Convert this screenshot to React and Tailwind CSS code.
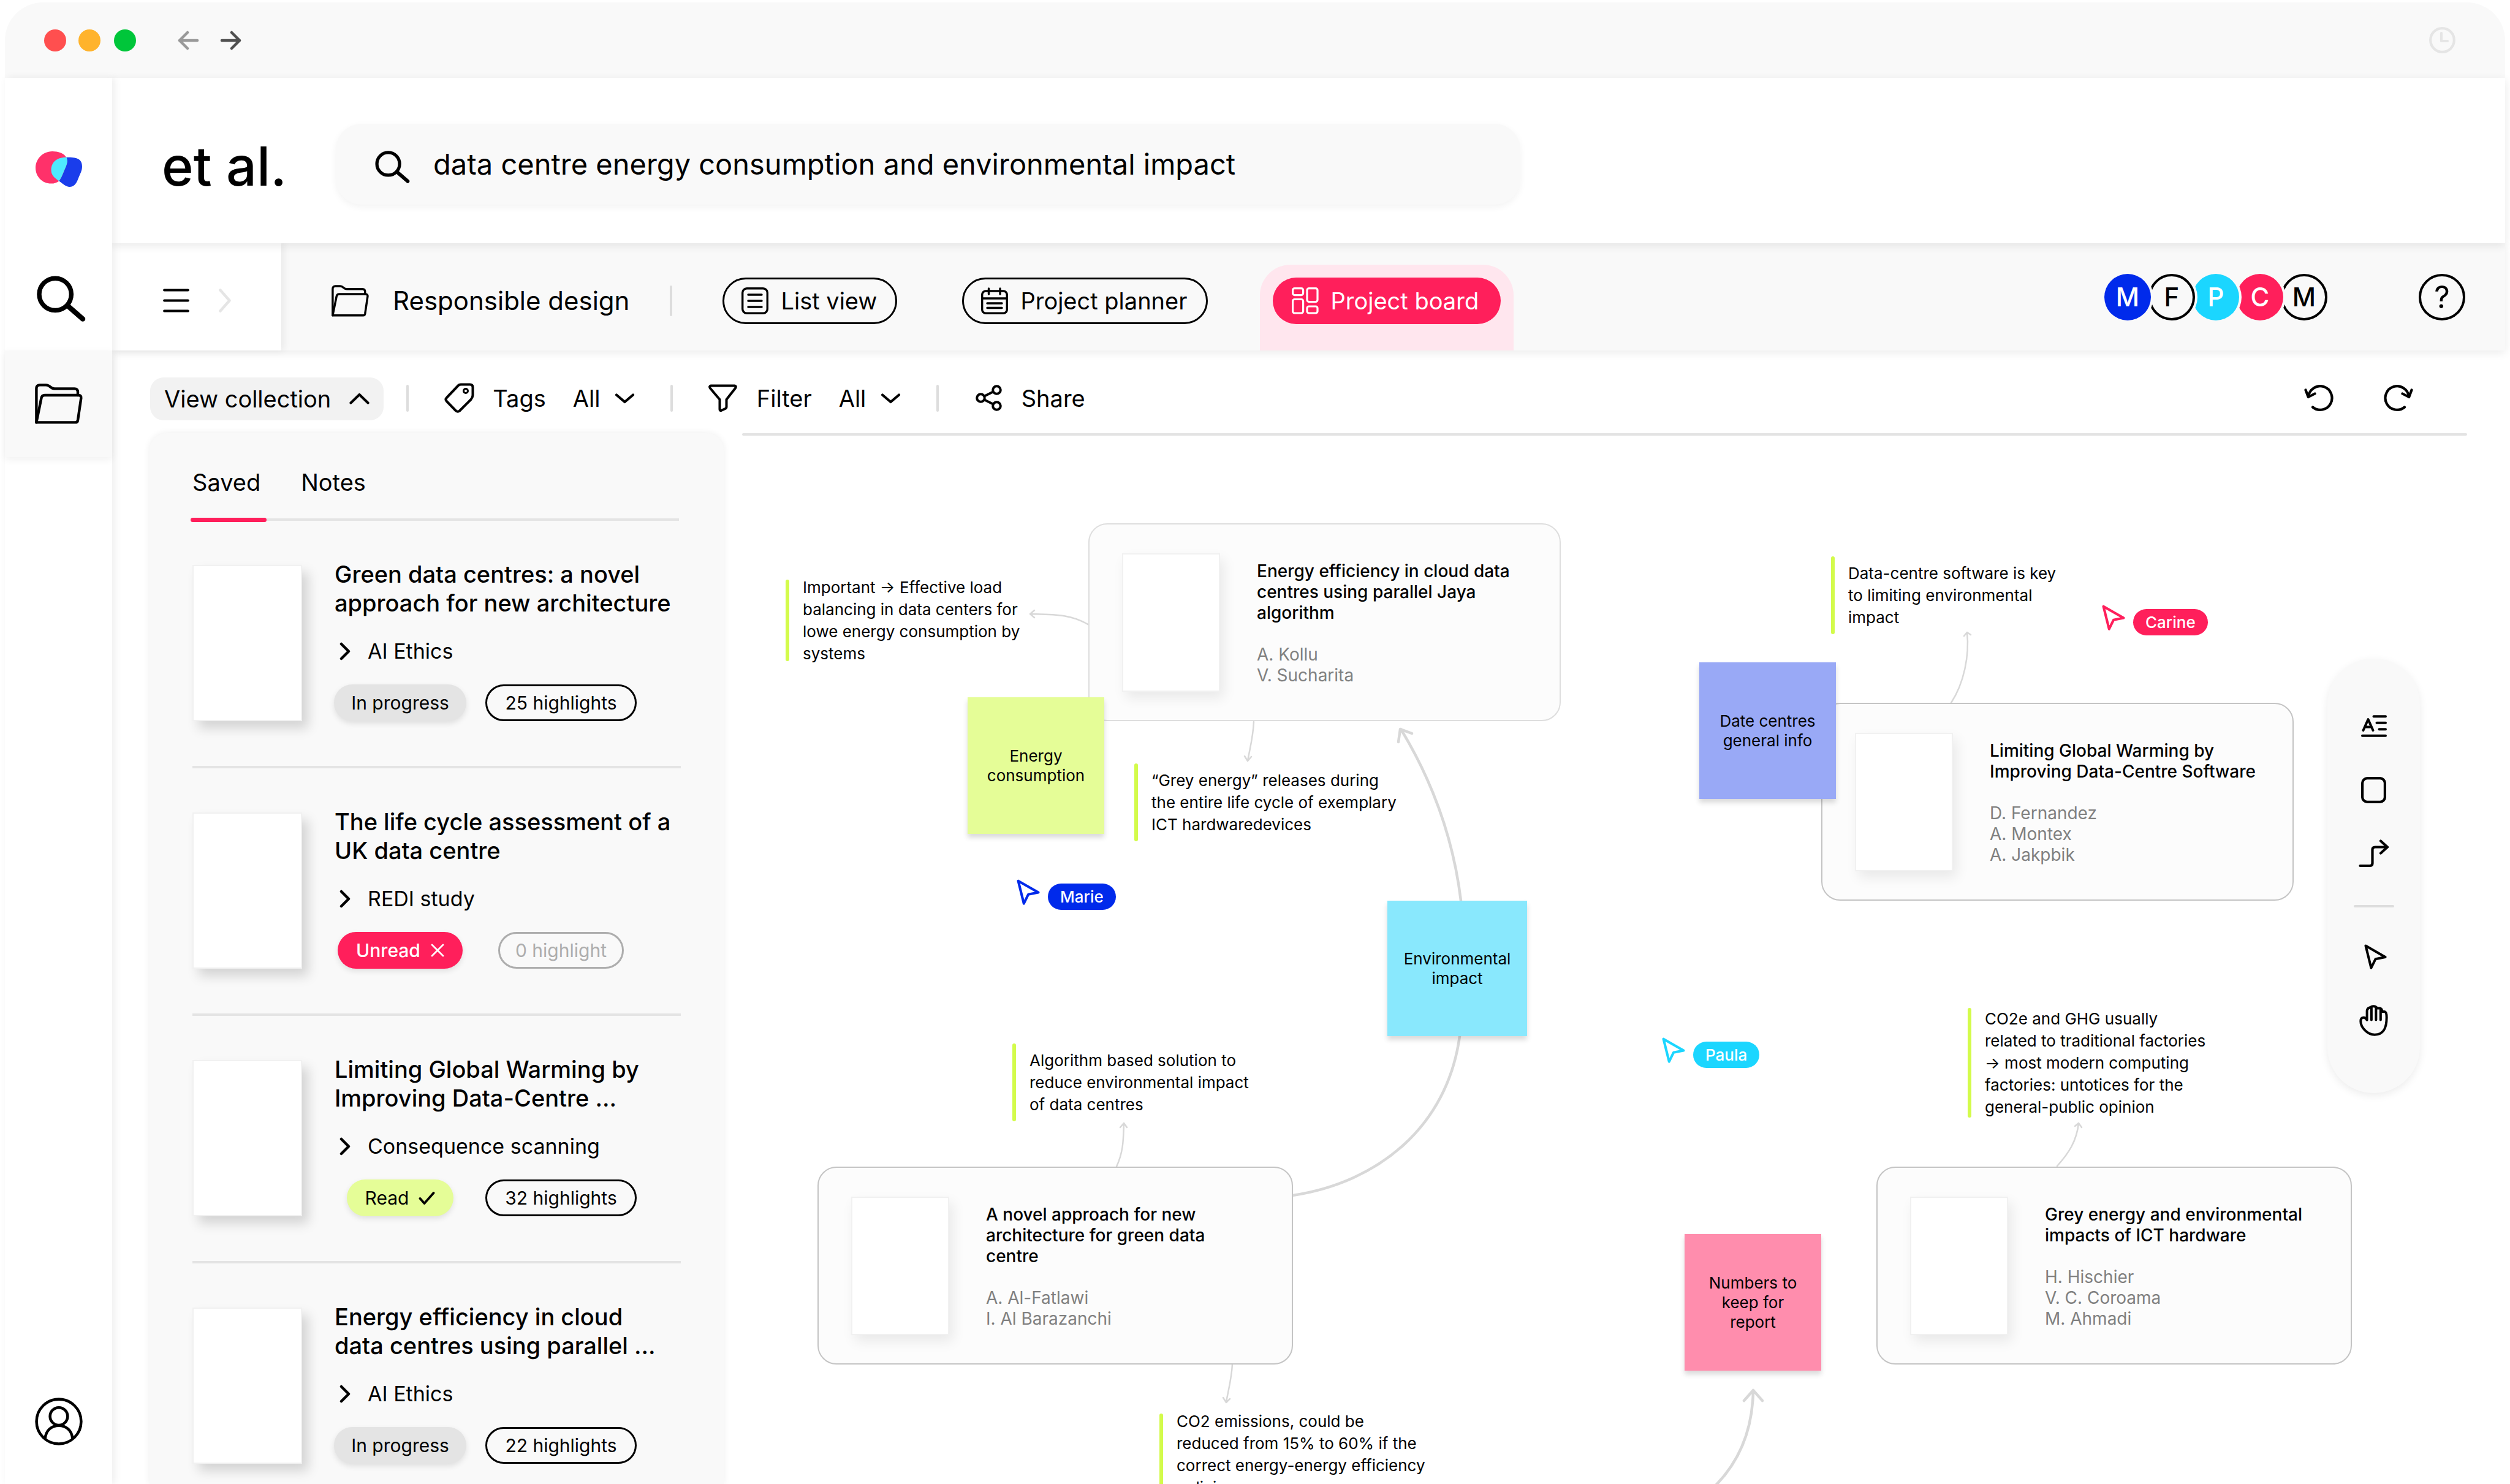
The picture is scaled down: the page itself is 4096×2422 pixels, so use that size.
import React from "react";

/* ---------- icons ---------- */

function SearchIcon({ className }) {
  return (
    <svg className={className} viewBox="104 773 268 252" fill="none" stroke="currentColor" strokeLinecap="round">
      <circle cx="205" cy="875" r="88" strokeWidth="25" />
      <path d="M279 943L356 1010" strokeWidth="28" />
    </svg>
  );
}

function FolderIcon({ className }) {
  return (
    <svg className={className} viewBox="0 0 78 66" fill="none" stroke="currentColor" strokeWidth="4.4" strokeLinejoin="round" strokeLinecap="round">
      <path d="M2.4 63.4V8Q2.4 2.4 8 2.4H18C21 2.4 23 3.6 25 5.4C27.500 7.600 29 8.400 32 8.400H64.500Q70 8.400 70 14V19" />
      <path d="M2.4 63.4L10.5 23.500Q11.500 19 16 19H71Q76 19 75.300 24L70 60Q69.400 63.400 66 63.400Z" />
    </svg>
  );
}

function Chevron({ className, d = "M3 4.500L16.500 16L30 4.500" }) {
  return (
    <svg className={className} viewBox="0 0 33 19" fill="none" stroke="currentColor" strokeWidth="4.200" strokeLinecap="round" strokeLinejoin="round">
      <path d={d} />
    </svg>
  );
}

function ChevronRightIcon({ className }) {
  return (
    <svg className={className} viewBox="0 0 18 30" fill="none" stroke="currentColor" strokeWidth="4.500" strokeLinecap="round" strokeLinejoin="round">
      <path d="M3 3L15 15L3 27" />
    </svg>
  );
}

function PointerIcon({ className }) {
  return (
    <svg className={className} viewBox="272 133 156 174" fill="none" stroke="currentColor" strokeWidth="17" strokeLinecap="round" strokeLinejoin="round">
      <path d="M282 144L418 222L350 236L320 297Z" />
    </svg>
  );
}

function HandIcon({ className }) {
  return (
    <svg className={className} viewBox="227 557 201 218" fill="none" stroke="currentColor" strokeWidth="17" strokeLinecap="round" strokeLinejoin="round">
      <path d="M281 663C270 640 237 636 237 672C237 712 282 765 335 765C405 765 418 705 418 645C418 612 412 604 402 604H386C386 590 382 580 368 580H352C345 570 335 567 325 567C315 567 308 572 300 576C288 579 281 586 281 602Z" />
      <path d="M312 576V662M344 578V662M376 590V662" />
    </svg>
  );
}

function LogoIcon({ className }) {
  return (
    <svg className={className} viewBox="100 93 256 195">
      <path fill="#1a3deb" d="M268 126C310 126 356 126 356 176C356 200 345 215 333 247C322 275 308 288 288 288C265 288 250 270 229 256C210 242 186 228 186 196C186 160 210 126 250 126Z" />
      <path fill="#ff316a" d="M192 93C225 93 258 103 268 126C280 150 272 165 255 205C245 230 238 245 229 256C218 265 203 270 186 270C135 270 100 230 100 183C100 135 140 93 192 93Z" />
      <path fill="#4feaff" d="M270 126C280 150 274 162 255 205C245 230 238 245 229 256C208 240 186 226 186 196C186 155 215 125 270 126Z" />
    </svg>
  );
}

function ListIcon() {
  return (
    <svg className="h-11 w-11" viewBox="0 0 44 44" fill="none" stroke="currentColor" strokeWidth="3.400" strokeLinecap="round">
      <rect x="1.700" y="1.700" width="40.600" height="40.600" rx="7" />
      <path d="M11 12H33M11 22H33M11 32H33" />
    </svg>
  );
}

function PlannerIcon() {
  return (
    <svg className="h-11 w-11" viewBox="0 0 44 44" fill="none" stroke="currentColor" strokeWidth="3.400" strokeLinecap="round">
      <rect x="1.700" y="6" width="40.600" height="36.300" rx="6" />
      <path d="M2 18H42M12.500 2V11M31 2V11M10 26H34M10 33.500H34" />
    </svg>
  );
}

function BoardIcon() {
  return (
    <svg className="h-11 w-11" viewBox="0 0 44 44" fill="none" stroke="currentColor" strokeWidth="3.200">
      <rect x="1.600" y="1.600" width="17" height="11" rx="3" />
      <rect x="25" y="1.600" width="17" height="22" rx="3" />
      <rect x="1.600" y="19.500" width="17" height="22.500" rx="3" />
      <rect x="25" y="31" width="17" height="11" rx="3" />
    </svg>
  );
}

function TagIcon() {
  return (
    <svg className="h-[49px] w-[49px]" viewBox="0 0 49 49" fill="none" stroke="currentColor" strokeWidth="4" strokeLinejoin="round">
      <path d="M27 2.500H42Q46.500 2.500 46.500 7V20Q46.300 24 43.500 27L25 45.500Q22 48 19 45.500L4 30Q1 27 4 24L22 5Q24 2.500 27 2.500Z" />
      <circle cx="35" cy="13" r="3.500" strokeWidth="3" />
    </svg>
  );
}

function FilterIcon() {
  return (
    <svg className="h-[45px] w-[47px]" viewBox="0 0 47 45" fill="none" stroke="currentColor" strokeWidth="4" strokeLinejoin="round">
      <path d="M4 2.500H43Q46 3 44 6.500L29.500 25V37Q29.500 39 27.500 40L21 43Q18.500 43.500 18.500 41V25L2.800 6.500Q1 3 4 2.500Z" />
    </svg>
  );
}

function ShareIcon() {
  return (
    <svg className="h-[43px] w-[43px]" viewBox="0 0 43 43" fill="none" stroke="currentColor" strokeWidth="4">
      <circle cx="34.500" cy="8.500" r="6.300" />
      <circle cx="8.500" cy="21.500" r="6.300" />
      <circle cx="34.500" cy="34.500" r="6.300" />
      <path d="M14.500 18.500L28.500 11.500M14.500 24.500L28.500 31.500" />
    </svg>
  );
}

function UndoIcon() {
  return (
    <svg className="h-[43px] w-[49px]" viewBox="0 0 49 43" fill="none" stroke="currentColor" strokeWidth="4.200" strokeLinecap="round" strokeLinejoin="round">
      <path d="M7 19.500A19.300 19.300 0 1 1 14 36.500M2.500 8.500L6.800 20L17.500 14.500" />
    </svg>
  );
}

function RedoIcon() {
  return (
    <svg className="h-[43px] w-[49px]" viewBox="0 0 49 43" fill="none" stroke="currentColor" strokeWidth="4.200" strokeLinecap="round" strokeLinejoin="round">
      <path d="M42 19.500A19.300 19.300 0 1 0 35 36.500M46.500 8.500L42.200 20L31.500 14.500" />
    </svg>
  );
}

/* ---------- window chrome and navigation ---------- */

function TitleBar() {
  return (
    <div className="mx-2 mt-1 flex h-[123px] shrink-0 items-center rounded-t-[62px] bg-[#f9f9f9] pr-[81px] pl-16">
      <div className="flex gap-5">
        <span className="size-9 rounded-full bg-[#ff4f4f]" />
        <span className="size-9 rounded-full bg-[#ffb32c]" />
        <span className="ml-0.5 size-9 rounded-full bg-[#00c63a]" />
      </div>
      <button aria-label="Back" className="ml-[68px] text-[#999999]">
        <svg className="h-[32px] w-[35px]" viewBox="0 0 35 32" fill="none" stroke="currentColor" strokeWidth="4.500" strokeLinecap="round" strokeLinejoin="round">
          <path d="M3 16H32M16 3L3 16L16 29" />
        </svg>
      </button>
      <button aria-label="Forward" className="ml-[34px] text-[#505050]">
        <svg className="h-[32px] w-[35px]" viewBox="0 0 35 32" fill="none" stroke="currentColor" strokeWidth="4.500" strokeLinecap="round" strokeLinejoin="round">
          <path d="M3 16H32M19 3L32 16L19 29" />
        </svg>
      </button>
      <button aria-label="History" className="ml-auto text-[#e5e5e5]">
        <svg className="size-[43px]" viewBox="0 0 43 43" fill="none" stroke="currentColor" strokeWidth="4.200" strokeLinecap="round" strokeLinejoin="round">
          <circle cx="21.500" cy="21.500" r="19.300" />
          <path d="M20 10V23H30" />
        </svg>
      </button>
    </div>
  );
}

function SideNav() {
  return (
    <nav aria-label="Main" className="relative z-40 ml-2 flex w-[175px] shrink-0 flex-col bg-white shadow-[4px_0_12px_rgba(0,0,0,0.07)]">
      <a href="#home" aria-label="Home" className="flex h-[270px] items-center justify-center pt-7">
        <LogoIcon className="h-[58px] w-[76px]" />
      </a>
      <a href="#search" aria-label="Search" className="flex h-[175px] items-center justify-center pt-1.5 pl-2">
        <SearchIcon className="h-[75px] w-20" />
      </a>
      <a href="#projects" aria-label="Projects" className="flex h-[174px] items-center justify-center bg-[#f9f9f9] shadow-[0_4px_12px_rgba(0,0,0,0.06)]">
        <FolderIcon className="h-[66px] w-[78px]" />
      </a>
      <a href="#account" aria-label="Account" className="mt-auto mb-[60px] flex justify-center">
        <svg className="size-[84px]" viewBox="0 0 24 24" fill="none" stroke="currentColor" strokeWidth="1.300">
          <circle cx="12" cy="12" r="10.400" />
          <circle cx="12" cy="9.600" r="4.100" />
          <path d="M5.600 20C6 16 8.600 13.900 12 13.900S18 16 18.400 20" />
        </svg>
      </a>
    </nav>
  );
}

function Header() {
  return (
    <header className="relative z-30 flex h-[270px] shrink-0 items-center bg-white pt-3 pl-[81px] shadow-[0_4px_14px_rgba(0,0,0,0.09)]">
      <h1 className="w-[284px] shrink-0 pt-1.5 text-[88px] leading-[88px] font-medium">et al.</h1>
      <label className="flex h-[132px] max-w-[1933px] flex-1 items-center rounded-[42px] bg-[#f9f9f9] pr-10 pl-16 shadow-[0_4px_12px_rgba(0,0,0,0.05)]">
        <SearchIcon className="mt-2 h-[53px] w-[57px] shrink-0" />
        <input
          aria-label="Search papers"
          defaultValue="data centre energy consumption and environmental impact"
          className="ml-[38px] min-w-0 flex-1 bg-transparent text-[47px] leading-[56px] outline-none"
        />
      </label>
    </header>
  );
}

const members = [
  { name: "Marie", initial: "M", look: "z-50 bg-[#002aeb] text-white" },
  { name: "Fay", initial: "F", look: "z-40 border-4 border-black bg-[#f9f9f9]" },
  { name: "Paula", initial: "P", look: "z-30 bg-[#1bd6ff] text-white" },
  { name: "Carine", initial: "C", look: "z-20 bg-[#ff1f5b] text-white" },
  { name: "Max", initial: "M", look: "z-10 border-4 border-black bg-[#f9f9f9]" },
];

function ProjectBar() {
  const pill = "flex h-[76px] items-center gap-5 rounded-full text-[38px] leading-[48px] whitespace-nowrap";
  return (
    <div className="relative z-20 flex h-[175px] shrink-0 bg-[#f9f9f9] shadow-[0_4px_14px_rgba(0,0,0,0.08)]">
      <div className="flex w-[276px] items-center bg-white pt-3 pl-[83px] shadow-[4px_0_12px_rgba(0,0,0,0.07)]">
        <button aria-label="Menu">
          <svg className="h-[39px] w-[43px]" viewBox="0 0 43 39" stroke="currentColor" strokeWidth="4.200" strokeLinecap="round">
            <path d="M2.200 2.500H40.800M2.200 19.500H40.800M2.200 36.500H40.800" />
          </svg>
        </button>
        <button aria-label="Expand" className="ml-12 text-[#e5e5e5]">
          <svg className="h-[39px] w-5" viewBox="0 0 20 39" fill="none" stroke="currentColor" strokeWidth="4.500" strokeLinecap="round" strokeLinejoin="round">
            <path d="M2.500 2.500L17.500 19.500L2.500 36.500" />
          </svg>
        </button>
      </div>
      <div className="flex items-center pt-3 pl-[82px]">
        <FolderIcon className="h-[52px] w-[61px]" />
        <h2 className="ml-[39px] text-[42px] leading-[48px] whitespace-nowrap">Responsible design</h2>
        <span className="ml-[66px] h-[50px] w-1 rounded-full bg-[#dddddd]" />
        <button className={`${pill} ml-[82px] border-3 border-black pr-[30px] pl-7`}>
          <ListIcon />
          List view
        </button>
        <button className={`${pill} ml-[106px] border-3 border-black pr-[30px] pl-7`}>
          <PlannerIcon />
          Project planner
        </button>
      </div>
      <div className="ml-[85px] self-end rounded-t-[50px] bg-[#ffe6ee] px-[21px] pt-[21px] pb-[43px]">
        <button className={`${pill} bg-[#ff1f5b] pr-9 pl-[31px] text-white`}>
          <BoardIcon />
          Project board
        </button>
      </div>
      <div className="mr-[65px] ml-auto flex items-center">
        <div className="flex">
          {members.map((m, i) => (
            <span
              key={i}
              title={m.name}
              className={`relative -ml-1 flex size-[76px] items-center justify-center rounded-full text-[42px] leading-[48px] font-medium shadow-[0_0_0_4px_#f9f9f9] ${m.look}`}
            >
              {m.initial}
            </span>
          ))}
        </div>
        <button aria-label="Help" className="ml-[149px] flex size-[76px] items-center justify-center rounded-full border-4 border-black text-[50px] leading-[60px]">
          ?
        </button>
      </div>
    </div>
  );
}

function Divider({ className = "" }) {
  return <span className={`h-11 w-1 shrink-0 rounded-full bg-[#dddddd] ${className}`} />;
}

function AllSelect({ id }) {
  return (
    <span className="relative ml-11 flex items-center">
      <select id={id} className="w-[101px] appearance-none bg-transparent text-[38px] leading-[48px] outline-none">
        <option>All</option>
      </select>
      <Chevron className="pointer-events-none absolute right-0 h-[19px] w-[33px]" />
    </span>
  );
}

function Toolbar() {
  return (
    <div className="flex h-[135px] shrink-0 items-center pt-5 pl-[62px] text-[38px] leading-[48px] whitespace-nowrap">
      <button className="mt-0.5 flex h-[70px] items-center gap-[30px] rounded-[22px] bg-[#f2f2f2] px-[23px]">
        View collection
        <Chevron className="h-[19px] w-[33px]" d="M2.500 16.500L16.500 3L30.500 16.500" />
      </button>
      <Divider className="ml-[37px]" />
      <label htmlFor="tags" className="ml-[58px] flex items-center gap-[30px]">
        <TagIcon />
        Tags
      </label>
      <AllSelect id="tags" />
      <Divider className="ml-[58px]" />
      <label htmlFor="filter" className="ml-[58px] flex items-center gap-[32px]">
        <FilterIcon />
        Filter
      </label>
      <AllSelect id="filter" />
      <Divider className="ml-[58px]" />
      <button className="ml-[60px] flex items-center gap-[32px]">
        <ShareIcon />
        Share
      </button>
      <button aria-label="Undo" className="ml-auto">
        <UndoIcon />
      </button>
      <button aria-label="Redo" className="mr-[150px] ml-20">
        <RedoIcon />
      </button>
    </div>
  );
}

/* ---------- collection panel ---------- */

const papers = [
  { title: ["Green data centres: a novel", "approach for new architecture"], folder: "AI Ethics", status: "progress", marks: "25 highlights" },
  { title: ["The life cycle assessment of a", "UK data centre"], folder: "REDI study", status: "unread", marks: "0 highlight" },
  { title: ["Limiting Global Warming by", "Improving Data-Centre ..."], folder: "Consequence scanning", status: "read", marks: "32 highlights" },
  { title: ["Energy efficiency in cloud", "data centres using parallel ..."], folder: "AI Ethics", status: "progress", marks: "22 highlights" },
];

function StatusPill({ status }) {
  const base = "flex h-[60px] items-center rounded-full text-[30px] leading-10 whitespace-nowrap shadow-[0_4px_10px_rgba(0,0,0,0.1)]";
  if (status === "unread") {
    return (
      <button className={`${base} gap-[17px] bg-[#ff1f5b] px-[30px] font-medium text-white`}>
        Unread
        <svg className="size-[22px]" viewBox="0 0 22 22" stroke="currentColor" strokeWidth="2.800" strokeLinecap="round">
          <path d="M2 2L20 20M20 2L2 20" />
        </svg>
      </button>
    );
  }
  if (status === "read") {
    return (
      <button className={`${base} gap-4 bg-[#e5fd97] px-[30px]`}>
        Read
        <svg className="h-[23px] w-[27px]" viewBox="0 0 27 23" fill="none" stroke="currentColor" strokeWidth="3.800" strokeLinecap="round" strokeLinejoin="round">
          <path d="M2.500 12L9.500 20L24.500 3" />
        </svg>
      </button>
    );
  }
  return <button className={`${base} bg-[#e4e4e4] px-7`}>In progress</button>;
}

function PaperItem({ paper }) {
  const empty = paper.status === "unread";
  return (
    <li className="mb-[72px] flex border-b-4 border-[#e4e4e4] pb-[73px]">
      <div className="h-[255px] w-[179px] shrink-0 border-2 border-[#f1f1f1] bg-white shadow-[10px_12px_18px_rgba(0,0,0,0.15)]" />
      <div className="-mt-2 ml-[53px]">
        <h3 className="text-[38px] leading-[47px] font-medium whitespace-nowrap">
          {paper.title[0]}
          <br />
          {paper.title[1]}
        </h3>
        <button className="mt-[31px] ml-2 flex h-12 items-center gap-[28px] text-[34px] leading-[48px] whitespace-nowrap">
          <ChevronRightIcon className="h-[30px] w-[18px]" />
          {paper.folder}
        </button>
        <div className="mt-[30px] flex gap-8">
          <div className="flex w-[214px] justify-center">
            <StatusPill status={paper.status} />
          </div>
          <div className="flex w-[247px] justify-center">
            <button
              className={`flex h-[60px] items-center rounded-full border-3 text-[30px] leading-10 whitespace-nowrap ${
                empty ? "border-[#adadad] px-[25px] text-[#adadad]" : "border-black px-[29px]"
              }`}
            >
              {paper.marks}
            </button>
          </div>
        </div>
      </div>
    </li>
  );
}

function CollectionPanel() {
  return (
    <aside className="ml-[61px] w-[937px] shrink-0 overflow-hidden rounded-t-[28px] bg-[#f9f9f9] px-[70px] pt-[56px] shadow-[0_0_12px_rgba(0,0,0,0.07)]">
      <div role="tablist" className="relative mr-[3px] -ml-[3px] flex h-[87px] items-start gap-[56px] border-b-4 border-[#e4e4e4] text-[38px] leading-[48px]">
        <button role="tab" aria-selected="true" className="relative h-[83px] pr-2.5 pb-[35px] pl-[3px]">
          Saved
          <span className="absolute -bottom-1.5 left-0 h-[7px] w-full rounded-full bg-[#ff1f5b]" />
        </button>
        <button role="tab" aria-selected="false" className="h-[83px] pb-[35px]">
          Notes
        </button>
      </div>
      <ul className="mt-[72px]">
        {papers.map((p) => (
          <PaperItem key={p.title[0]} paper={p} />
        ))}
      </ul>
    </aside>
  );
}

/* ---------- board ---------- */

const cards = [
  { place: "left-[595px] top-[143px] w-[771px] border-[#dedede]", title: "Energy efficiency in cloud data\ncentres using parallel Jaya\nalgorithm", authors: "A. Kollu\nV. Sucharita" },
  { place: "left-[153px] top-[1193px] w-[776px] border-[#c4c4c4]", title: "A novel approach for new\narchitecture for green data\ncentre", authors: "A. Al-Fatlawi\nI. Al Barazanchi" },
  { place: "left-[1791px] top-[436px] w-[771px] border-[#c4c4c4]", title: "Limiting Global Warming by\nImproving Data-Centre Software", authors: "D. Fernandez\nA. Montex\nA. Jakpbik" },
  { place: "left-[1881px] top-[1193px] w-[776px] border-[#c4c4c4]", title: "Grey energy and environmental\nimpacts of ICT hardware", authors: "H. Hischier\nV. C. Coroama\nM. Ahmadi" },
];

const notes = [
  { place: "left-[101px] top-[235px] h-[133px]", text: "Important → Effective load\nbalancing in data centers for\nlowe energy consumption by\nsystems" },
  { place: "left-[670px] top-[535px] h-[127px]", text: "“Grey energy” releases during\nthe entire life cycle of exemplary\nICT hardwaredevices" },
  { place: "left-[471px] top-[992px] h-[127px]", text: "Algorithm based solution to\nreduce environmental impact\nof data centres" },
  { place: "left-[1807px] top-[197px] h-[127px]", text: "Data-centre software is key\nto limiting environmental\nimpact" },
  { place: "left-[2030px] top-[934px] h-[179px]", text: "CO2e and GHG usually\nrelated to traditional factories\n→ most modern computing\nfactories: untotices for the\ngeneral-public opinion" },
  { place: "left-[711px] top-[1596px] h-[133px]", text: "CO2 emissions, could be\nreduced from 15% to 60% if the\ncorrect energy-energy efficiency\npolicies" },
];

const stickies = [
  { place: "left-[398px] top-[427px] h-[223px] w-[223px] bg-[#e5fd97]", text: "Energy\nconsumption" },
  { place: "left-[1083px] top-[759px] h-[221px] w-[228px] bg-[#89e8fd]", text: "Environmental\nimpact" },
  { place: "left-[1592px] top-[370px] h-[223px] w-[223px] bg-[#99a9f6]", text: "Date centres\ngeneral info" },
  { place: "left-[1568px] top-[1303px] h-[223px] w-[223px] bg-[#ff8dad]", text: "Numbers to\nkeep for\nreport" },
];

const cursors = [
  { name: "Marie", place: "left-[478px] top-[724px]", ink: "text-[#002aeb]", fill: "bg-[#002aeb]" },
  { name: "Carine", place: "left-[2249px] top-[276px]", ink: "text-[#ff1f5b]", fill: "bg-[#ff1f5b]" },
  { name: "Paula", place: "left-[1531px] top-[982px]", ink: "text-[#1bd6ff]", fill: "bg-[#1bd6ff]" },
];

function Connectors() {
  return (
    <svg className="absolute inset-0 h-full w-full overflow-visible" fill="none" stroke="#d8d8d8" strokeLinecap="round" strokeLinejoin="round">
      <g transform="translate(-1181 -711)">
        <g strokeWidth="2.500">
          <path d="M1777 1020C1748 1002 1720 1003 1681 1002M1688 996L1681 1002L1688 1008" />
          <path d="M2046 1178C2045 1202 2040 1220 2036 1242M2031 1234L2036 1242L2042 1235" />
          <path d="M1822 1904C1834 1878 1833 1858 1834 1833M1828 1840L1834 1833L1839 1840" />
          <path d="M2011 2226C2010 2250 2004 2270 2001 2289M1996 2281L2001 2289L2007 2283" />
          <path d="M3184 1147C3205 1115 3214 1070 3210 1032M3205 1038L3210 1032L3216 1036" />
          <path d="M3357 1903C3376 1882 3389 1862 3392 1833M3386 1838L3392 1833L3397 1840" />
        </g>
        <g strokeWidth="4.500">
          <path d="M2384 1470Q2366 1322 2286 1190M2282 1211L2285 1190L2304 1197" />
          <path d="M2109 1951C2250 1930 2362 1838 2382 1691" />
          <path d="M2861 2270C2860 2330 2840 2384 2798 2426M2846 2286L2861 2269L2876 2286" />
        </g>
      </g>
    </svg>
  );
}

function BoardCard({ card }) {
  return (
    <article className={`absolute flex h-[323px] gap-[60px] rounded-[31px] border-2 bg-[#fcfcfc] pl-[53px] ${card.place}`}>
      <div className="mt-[47px] h-[226px] w-[160px] border-2 border-[#f1f1f1] bg-white shadow-[6px_10px_20px_rgba(0,0,0,0.08)]" />
      <div className="pt-[59px] text-[28px] leading-[34px] whitespace-pre-line">
        <h3 className="mb-[34px] font-medium">{card.title}</h3>
        <p className="text-[#808080]">{card.authors}</p>
      </div>
    </article>
  );
}

function Note({ note }) {
  return (
    <div className={`absolute flex items-center gap-[22px] ${note.place}`}>
      <span className="h-full w-1.5 rounded-full bg-[#d3fb4b]" />
      <p className="text-[26px] leading-[36px] whitespace-pre">{note.text}</p>
    </div>
  );
}

function BoardTools() {
  const tool = "flex h-12 w-14 items-center justify-center";
  return (
    <div role="toolbar" aria-label="Board tools" className="absolute top-[364px] right-[139px] flex h-[709px] w-[151px] flex-col items-center gap-14 rounded-full bg-[#f9f9f9] pt-[86px] shadow-[0_4px_14px_rgba(0,0,0,0.08)]">
      <button aria-label="Text" className={tool}>
        <svg className="h-9 w-[42px]" viewBox="0 0 42 36" fill="none" stroke="currentColor" strokeWidth="4" strokeLinecap="round" strokeLinejoin="round">
          <path d="M20.500 2.200H40M25.500 12.700H40M29.500 23.300H40M2 33.800H40M3.500 25L11.500 7L19.500 25M6.500 19.500H17" />
        </svg>
      </button>
      <button aria-label="Shape" className={tool}>
        <svg className="h-[43px] w-[41px]" viewBox="0 0 41 43" fill="none" stroke="currentColor" strokeWidth="4.200">
          <rect x="2.100" y="2.100" width="36.800" height="38.800" rx="8" />
        </svg>
      </button>
      <button aria-label="Connector" className={tool}>
        <svg className="h-[46px] w-[50px]" viewBox="0 0 50 46" fill="none" stroke="currentColor" strokeWidth="4.200" strokeLinecap="round" strokeLinejoin="round">
          <path d="M2.500 43H18Q22.500 43 22.500 39V16.500Q22.500 12.500 27 12.500H47M36 2.500L47 12.500L36 22.500" />
        </svg>
      </button>
      <span className="mt-1 h-1 w-[66px] shrink-0 rounded-full bg-[#dddddd]" />
      <button aria-label="Select" className={`${tool} pl-1.5`}>
        <PointerIcon className="h-[41px] w-[37px]" />
      </button>
      <button aria-label="Pan" className={tool}>
        <HandIcon className="h-[51px] w-[47px]" />
      </button>
    </div>
  );
}

function Board() {
  return (
    <div className="relative min-h-0 flex-1 overflow-hidden">
      <Connectors />
      {cards.map((c) => (
        <BoardCard key={c.title} card={c} />
      ))}
      {notes.map((n) => (
        <Note key={n.text} note={n} />
      ))}
      {stickies.map((s) => (
        <div key={s.text} className={`absolute flex items-center justify-center text-center text-[26px] leading-[32px] whitespace-pre-line shadow-[0_6px_8px_rgba(0,0,0,0.15)] ${s.place}`}>
          {s.text}
        </div>
      ))}
      {cursors.map((c) => (
        <div key={c.name} className={`absolute flex gap-[13px] ${c.place}`}>
          <PointerIcon className={`h-[42px] w-[38px] ${c.ink}`} />
          <span className={`mt-[7px] flex h-[43px] items-center rounded-full px-5 text-[26px] leading-[32px] font-medium text-white ${c.fill}`}>{c.name}</span>
        </div>
      ))}
      <BoardTools />
    </div>
  );
}

export default function App() {
  return (
    <div className="flex h-screen flex-col overflow-hidden bg-white font-['Inter',sans-serif] text-black">
      <TitleBar />
      <div className="flex min-h-0 flex-1">
        <SideNav />
        <div className="mr-2 flex min-w-0 flex-1 flex-col">
          <Header />
          <ProjectBar />
          <Toolbar />
          <main className="flex min-h-0 flex-1">
            <CollectionPanel />
            <section aria-label="Project board" className="flex min-w-0 flex-1 flex-col">
              <div className="mr-[62px] ml-[30px] h-1 shrink-0 rounded-full bg-[#e3e3e3]" />
              <Board />
            </section>
          </main>
        </div>
      </div>
    </div>
  );
}
